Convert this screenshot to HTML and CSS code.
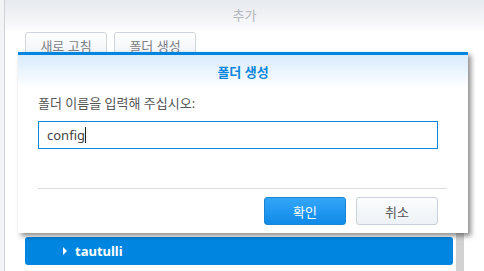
FILE: index.html
```html
<!DOCTYPE html>
<html lang="ko">
<head>
  <meta charset="UTF-8">
  <meta name="viewport" content="width=device-width, initial-scale=1.0">
  <title>추가</title>
  <link rel="stylesheet" href="styles.css">
</head>
<body>
  <div class="desk">
    <div class="window">
      <div class="window-header">추가</div>

      <div class="toolbar">
        <button class="tool-btn">새로 고침</button>
        <button class="tool-btn">폴더 생성</button>
      </div>

      <div class="content">
        <div class="tree">
          <div class="tree-row selected">
            <span class="caret"></span>
            <span class="tree-label">tautulli</span>
          </div>
        </div>
        <div class="scrollbar"></div>
      </div>
    </div>

    <div class="dialog">
      <div class="dialog-header">폴더 생성</div>
      <div class="dialog-body">
        <label for="folderName" class="form-label">폴더 이름을 입력해 주십시오:</label>
        <div class="form-input">
          <span>config</span><span class="cursor"></span>
        </div>
      </div>
      <div class="dialog-footer">
        <button class="btn btn-primary">확인</button>
        <button class="btn">취소</button>
      </div>
    </div>
  </div>
</body>
</html>
```

FILE: styles.css
```css
* {
  margin: 0;
  padding: 0;
  box-sizing: border-box;
}

body {
  font-family: "Noto Sans", "Noto Sans CJK KR", sans-serif;
  background-color: #f2f3f5;
  color: #333;
  width: 484px;
  height: 271px;
  overflow: hidden;
}

.desk {
  position: relative;
  height: 271px;
}

.window {
  position: absolute;
  top: 0;
  left: 4px;
  right: 0;
  bottom: 0;
  background-color: #fff;
  border-left: 1px solid #cfd2d6;
  display: flex;
  flex-direction: column;
}

.window-header {
  height: 30px;
  line-height: 30px;
  text-align: center;
  font-size: 13px;
  color: #b3b7bc;
  background: linear-gradient(#e6e9ed, #fbfbfc);
}

.toolbar {
  display: flex;
  gap: 7px;
  padding: 2px 0 0 20px;
}

.tool-btn {
  width: 82px;
  height: 26px;
  font-family: inherit;
  font-size: 13px;
  color: #7d8186;
  background: linear-gradient(#ffffff, #eef2f6);
  border: 1px solid #cfd5dc;
  border-radius: 3px;
}

.content {
  flex: 1;
  display: flex;
  padding: 0 20px;
}

.tree {
  flex: 1;
  display: flex;
  flex-direction: column;
  justify-content: flex-end;
  padding-bottom: 6px;
}

.tree-row {
  height: 28px;
  display: flex;
  align-items: center;
  padding-left: 38px;
  border-radius: 3px;
}

.tree-row.selected {
  background-color: #0086e0;
  color: #fff;
}

.caret {
  width: 0;
  height: 0;
  border-top: 4px solid transparent;
  border-bottom: 4px solid transparent;
  border-left: 4px solid #fff;
  margin-right: 8px;
}

.tree-label {
  font-size: 13px;
  font-weight: 700;
}

.scrollbar {
  width: 8px;
  margin-left: 3px;
  background-color: #d2d2d2;
}

.dialog {
  position: absolute;
  top: 52px;
  left: 18px;
  width: 450px;
  height: 181px;
  background-color: #fff;
  border-top: 3px solid #0086e0;
  box-shadow: 3px 3px 5px rgba(0, 0, 0, 0.45);
  display: flex;
  flex-direction: column;
}

.dialog-header {
  height: 34px;
  line-height: 34px;
  text-align: center;
  font-size: 13px;
  font-weight: 700;
  color: #0a86dc;
  background: linear-gradient(#d8ebfb, #ffffff);
}

.dialog-body {
  height: 100px;
  margin: 0 21px 0 20px;
  padding-top: 5px;
  border-bottom: 1px solid #dcdcdc;
}

.form-label {
  display: block;
  height: 18px;
  line-height: 18px;
  font-size: 13px;
  color: #555;
  margin-bottom: 9px;
}

.form-input {
  width: 400px;
  height: 28px;
  border: 1px solid #0a86dc;
  padding-left: 8px;
  display: flex;
  align-items: center;
  font-size: 13px;
  color: #444;
}

.cursor {
  width: 1px;
  height: 16px;
  background-color: #222;
}

.dialog-footer {
  display: flex;
  justify-content: flex-end;
  gap: 10px;
  padding: 8px 30px 0 0;
}

.btn {
  width: 82px;
  height: 28px;
  font-family: inherit;
  font-size: 13px;
  color: #555;
  background: linear-gradient(#fbfcfd, #eef2f6);
  border: 1px solid #c9d1da;
  border-radius: 3px;
}

.btn-primary {
  color: #fff;
  background: linear-gradient(#33a6f8, #108ae8);
  border-color: #1784d6;
}
```
